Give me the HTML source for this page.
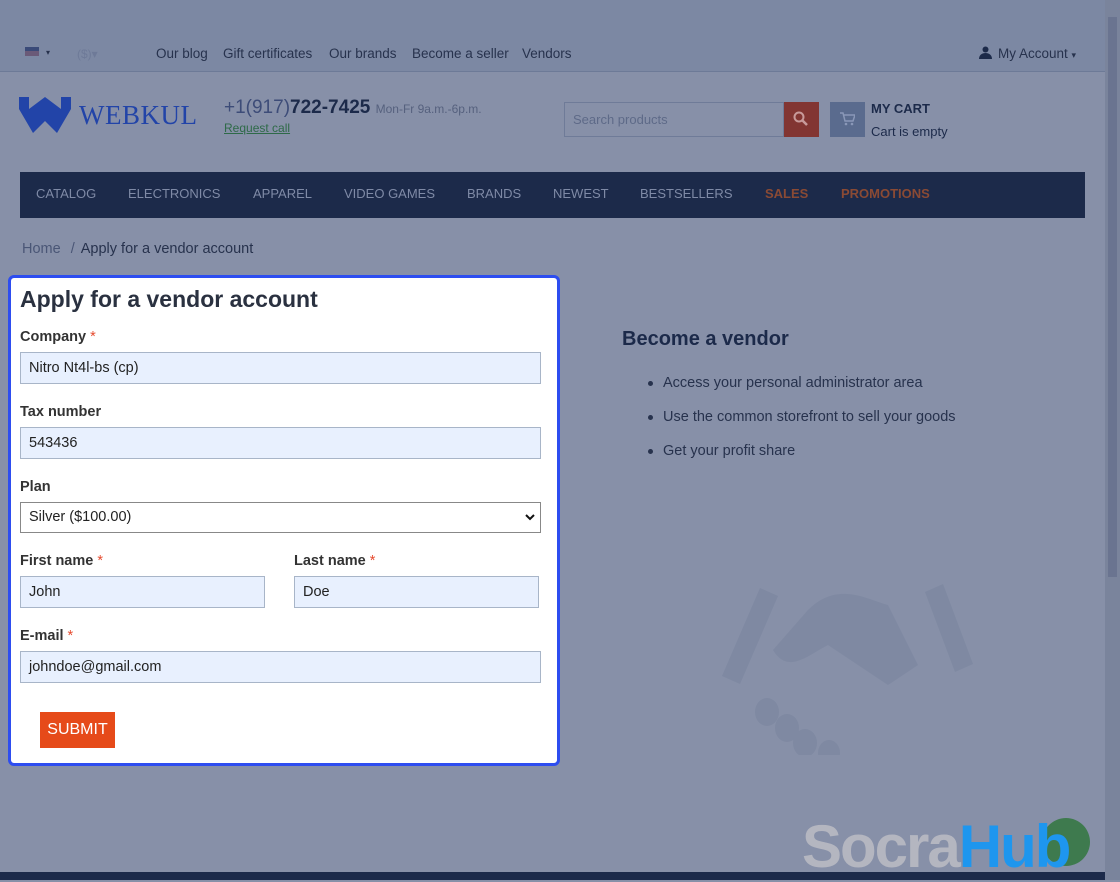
<!DOCTYPE html>
<html><head><meta charset="utf-8"><style>
*{box-sizing:border-box;margin:0;padding:0}
body{width:1120px;height:880px;overflow:hidden;background:#8790a8;font-family:"Liberation Sans",sans-serif;position:relative;color:#1f2a44}
.abs{position:absolute}
.top{left:0;top:0;width:1105px;height:72px;background:#7c88a3;border-bottom:1px solid #6d7a97}
.tl{top:46px;font-size:13.5px;color:#27324d}
.sb{right:0;top:0;width:15px;height:880px;background:#7a849c}
.thumb{right:3px;top:17px;width:9px;height:560px;background:#6a7490}
.nav{left:20px;top:172px;width:1065px;height:46px;background:#1c2a4a}
.nav span{position:absolute;top:14px;font-size:13px;color:#7f8aa6}
.form{left:8px;top:275px;width:552px;height:491px;background:#fff;border:3px solid #2d4df0;border-radius:6px}
.lbl{position:absolute;left:9px;font-size:14.5px;font-weight:bold;color:#333}
.lbl i{color:#e64a2e;font-style:normal;font-weight:normal}
.inp{position:absolute;height:32px;background:#e8f0fe;border:1px solid #a8b5c8;font-size:14.5px;padding:7px 8px;color:#222}
.li{font-size:14.5px;color:#27324d;left:663px}
.dot{position:absolute;left:648px;width:5px;height:5px;border-radius:50%;background:#27324d}
</style></head><body>
<div class="abs top"></div>
<div class="abs" style="left:25px;top:47px;width:14px;height:9px;background:#6a5a78;border-top:4px solid #3a4a78"></div>
<div class="abs tl" style="left:46px;font-size:8px;top:48px">▾</div>
<div class="abs tl" style="left:77px;color:#6e7a98;font-size:12px;top:47px">($)▾</div>
<div class="abs tl" style="left:156px">Our blog</div>
<div class="abs tl" style="left:223px">Gift certificates</div>
<div class="abs tl" style="left:329px">Our brands</div>
<div class="abs tl" style="left:412px">Become a seller</div>
<div class="abs tl" style="left:522px">Vendors</div>
<svg class="abs" style="left:979px;top:46px" width="13" height="13" viewBox="0 0 13 13"><circle cx="6.5" cy="3.5" r="3" fill="#1c2a4a"/><path d="M0 13c0-4 3-6 6.5-6s6.5 2 6.5 6z" fill="#1c2a4a"/></svg>
<div class="abs tl" style="left:998px">My Account <span style="font-size:9px">▾</span></div>

<svg class="abs" style="left:19px;top:97px" width="52" height="36" viewBox="0 0 52 36"><path d="M0 0h10v12L26 0l16 12V0h10v12L38 36 26 24 14 36 0 12z" fill="#2244a8"/></svg>
<div class="abs" style="left:79px;top:100px;font-family:'Liberation Serif',serif;font-size:27px;color:#2244a8;letter-spacing:0.5px">WEBKUL</div>
<div class="abs" style="left:224px;top:97px;font-size:19px;color:#3d4c78">+1(917)<b style="color:#1c2a4a">722-7425</b> <span style="font-size:12px;color:#56617e">Mon-Fr 9a.m.-6p.m.</span></div>
<div class="abs" style="left:224px;top:121px;font-size:12px;color:#2e6a48;text-decoration:underline">Request call</div>
<div class="abs" style="left:564px;top:102px;width:220px;height:35px;border:1px solid #6f7b98;background:#8790a8;font-size:13px;color:#5e6a88;padding:9px 8px">Search products</div>
<div class="abs" style="left:784px;top:102px;width:35px;height:35px;background:#823532"></div>
<svg class="abs" style="left:793px;top:111px" width="16" height="16" viewBox="0 0 16 16"><circle cx="6" cy="6" r="4.5" stroke="#c89a9a" stroke-width="2" fill="none"/><path d="M9.5 9.5L14 14" stroke="#c89a9a" stroke-width="2.5"/></svg>
<div class="abs" style="left:830px;top:102px;width:35px;height:35px;background:#5a6b8e"></div>
<svg class="abs" style="left:840px;top:112px" width="15" height="14" viewBox="0 0 15 14"><path d="M0 1h3l2 8h8l2-6H4" stroke="#8a98b8" stroke-width="1.5" fill="none"/><circle cx="6" cy="12" r="1.3" fill="#8a98b8"/><circle cx="12" cy="12" r="1.3" fill="#8a98b8"/></svg>
<div class="abs" style="left:871px;top:101px;font-size:13px;font-weight:bold;color:#1c2a4a">MY CART</div>
<div class="abs" style="left:871px;top:124px;font-size:13px;color:#1c2a4a">Cart is empty</div>

<div class="abs nav">
<span style="left:16px">CATALOG</span><span style="left:108px">ELECTRONICS</span><span style="left:233px">APPAREL</span><span style="left:324px">VIDEO GAMES</span><span style="left:447px">BRANDS</span><span style="left:533px">NEWEST</span><span style="left:620px">BESTSELLERS</span><span style="left:745px;color:#8a4a34;font-weight:bold">SALES</span><span style="left:821px;color:#8a4a34;font-weight:bold">PROMOTIONS</span>
</div>
<div class="abs" style="left:22px;top:241px;font-size:14.5px;color:#4a5676">Home <span style="margin:0 6px">/</span><span style="color:#27324d">Apply for a vendor account</span></div>

<div class="abs form">
<div class="abs" style="left:9px;top:8px;font-size:23px;font-weight:bold;color:#2a3140">Apply for a vendor account</div>
<div class="lbl" style="top:51px">Company <i>*</i></div>
<div class="inp" style="left:9px;top:74px;width:521px">Nitro Nt4l-bs (cp)</div>
<div class="lbl" style="top:126px">Tax number</div>
<div class="inp" style="left:9px;top:149px;width:521px">543436</div>
<div class="lbl" style="top:201px">Plan</div>
<div class="inp" style="left:9px;top:224px;width:521px;height:31px;background:#fff;border-color:#888;padding:6px 8px">Silver ($100.00)<svg style="position:absolute;right:5px;top:11px" width="10" height="7" viewBox="0 0 10 7"><path d="M1 1l4 4 4-4" stroke="#111" stroke-width="2" fill="none"/></svg></div>
<div class="lbl" style="top:275px">First name <i>*</i></div>
<div class="inp" style="left:9px;top:298px;width:245px">John</div>
<div class="lbl" style="top:275px;left:283px">Last name <i>*</i></div>
<div class="inp" style="left:283px;top:298px;width:245px">Doe</div>
<div class="lbl" style="top:350px">E-mail <i>*</i></div>
<div class="inp" style="left:9px;top:373px;width:521px">johndoe@gmail.com</div>
<div class="abs" style="left:29px;top:434px;width:75px;height:36px;background:#e64a19;color:#fff;font-size:16px;text-align:center;line-height:36px">SUBMIT</div>
</div>

<div class="abs" style="left:622px;top:328px;font-size:20px;font-weight:bold;color:#1c2a4a">Become a vendor</div>
<div class="dot" style="top:381px"></div><div class="abs li" style="top:375px">Access your personal administrator area</div>
<div class="dot" style="top:415px"></div><div class="abs li" style="top:409px">Use the common storefront to sell your goods</div>
<div class="dot" style="top:449px"></div><div class="abs li" style="top:443px">Get your profit share</div>

<svg class="abs" style="left:720px;top:580px" width="270" height="175" viewBox="0 0 270 175"><g fill="#7f89a2"><path d="M40 8l18 8-38 88-18-8z"/><path d="M205 12l18-8 30 80-18 8z"/><path d="M88 30c30-30 60-10 80-5l30 60-30 20-60-40c-20 10-40 30-55 5z"/><ellipse cx="47" cy="132" rx="12" ry="14"/><ellipse cx="67" cy="148" rx="12" ry="14"/><ellipse cx="85" cy="163" rx="12" ry="14"/><ellipse cx="109" cy="173" rx="11" ry="13"/></g></svg>

<div class="abs" style="left:0;top:872px;width:1105px;height:8px;background:#1c2a4a"></div>
<div class="abs" style="left:1042px;top:818px;width:48px;height:48px;border-radius:50%;background:#3e7a4e"></div>
<div class="abs" style="left:802px;top:812px;font-size:60px;font-weight:bold;letter-spacing:-2px;line-height:70px;white-space:nowrap"><span style="color:#b4b6c0">Socra</span><span style="color:#1e96ee">Hub</span></div>
<div class="abs sb"></div><div class="abs thumb"></div>
</body></html>
